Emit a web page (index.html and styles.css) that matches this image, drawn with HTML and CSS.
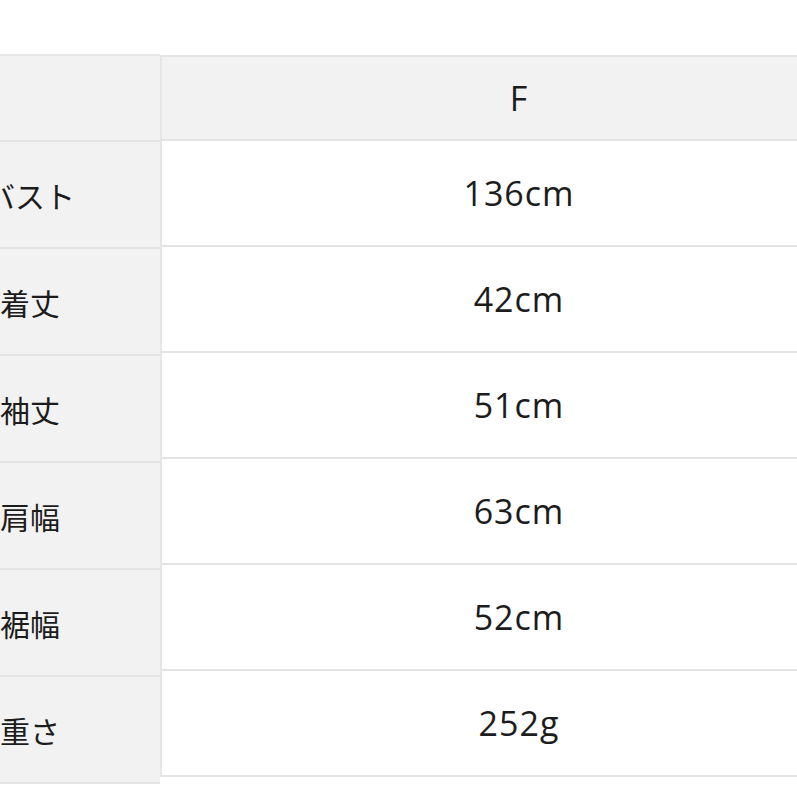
FILE: index.html
```html
<!DOCTYPE html>
<html lang="ja">
<head>
<meta charset="utf-8">
<title>サイズ表</title>
<link rel="stylesheet" href="styles.css">
</head>
<body>
<div class="sheet">
  <div class="col col-label">
    <div class="cell head"></div>
    <div class="cell">バスト</div>
    <div class="cell">着丈</div>
    <div class="cell">袖丈</div>
    <div class="cell">肩幅</div>
    <div class="cell">裾幅</div>
    <div class="cell">重さ</div>
  </div>
  <div class="col col-value">
    <div class="cell head">F</div>
    <div class="cell">136cm</div>
    <div class="cell">42cm</div>
    <div class="cell">51cm</div>
    <div class="cell">63cm</div>
    <div class="cell">52cm</div>
    <div class="cell">252g</div>
  </div>
</div>
</body>
</html>
```
FILE: styles.css
```css
html, body {
  margin: 0;
  padding: 0;
  background: #ffffff;
  overflow: hidden;
}

.sheet {
  display: flex;
  align-items: flex-start;
  width: max-content;
  margin-left: -100px;
  padding-top: 54px;
  color: #1c1c1c;
}

.col {
  display: flex;
  flex-direction: column;
  border-top: 2px solid #e4e4e4;
}

.cell {
  display: flex;
  align-items: center;
  justify-content: center;
  box-sizing: border-box;
  border-bottom: 2px solid #e4e4e4;
}

.col-label {
  width: 260px;
  background: #f2f2f2;
  font-family: "Noto Sans CJK JP", "Noto Sans", sans-serif;
  font-size: 30px;
}

.col-label .cell {
  height: 107px;
}

.col-label .cell.head {
  height: 86px;
}

.col-value {
  width: 714px;
  margin-top: 1px;
  border-left: 2px solid #e6e6e6;
  background: #ffffff;
  font-family: "Open Sans", "Noto Sans CJK JP", sans-serif;
  font-size: 34px;
  font-weight: 400;
  letter-spacing: 1px;
}

.col-value .cell {
  height: 106px;
}

.col-value .cell.head {
  height: 84px;
  background: #f2f2f2;
}
```
